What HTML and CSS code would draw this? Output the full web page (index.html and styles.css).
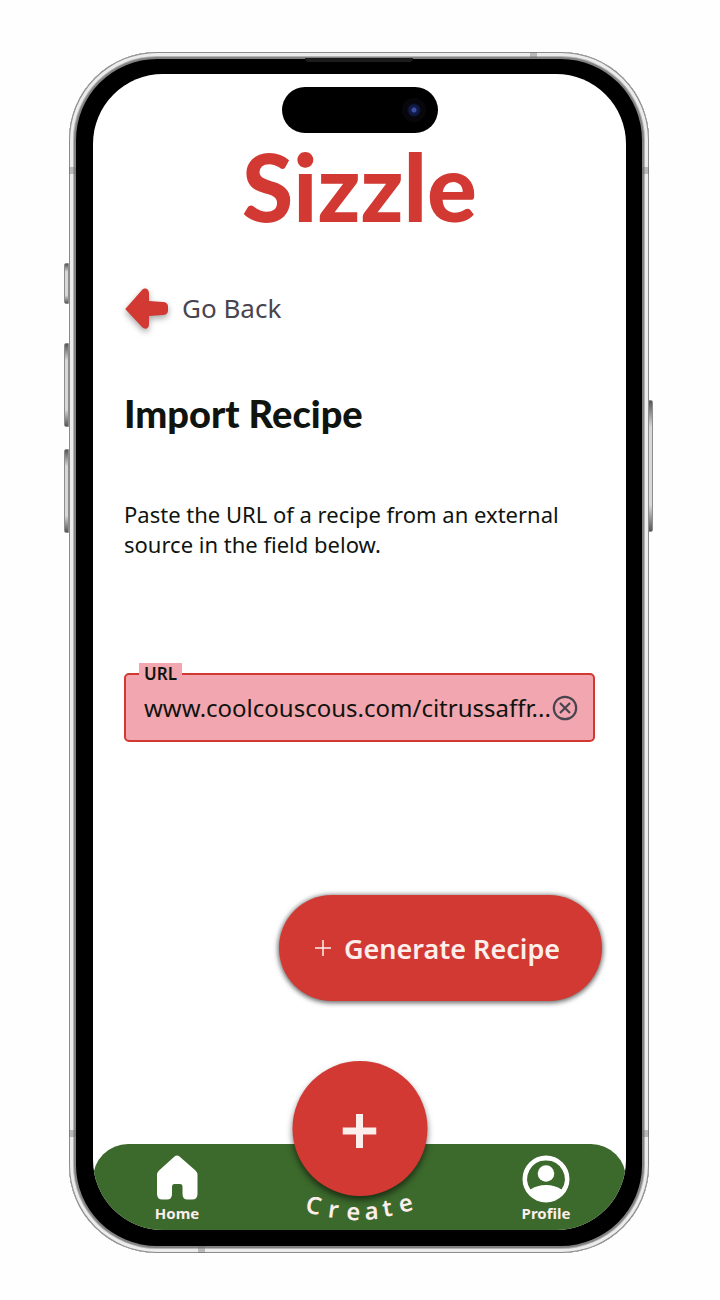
FILE: index.html
```html
<!DOCTYPE html>
<html lang="en">
<head>
<meta charset="utf-8">
<meta name="viewport" content="width=device-width, initial-scale=1">
<title>Sizzle – Import Recipe</title>
<link rel="stylesheet" href="styles.css">
</head>
<body>
<div class="phone">
  <span class="side-key key-action"></span>
  <span class="side-key key-up"></span>
  <span class="side-key key-down"></span>
  <span class="side-key key-power"></span>
  <span class="band band-left band-high"></span>
  <span class="band band-right band-high"></span>
  <span class="band band-left band-low"></span>
  <span class="band band-right band-low"></span>
  <span class="band band-top"></span>
  <span class="band band-bottom"></span>
  <span class="speaker"></span>

  <div class="screen">
    <div class="island"><span class="camera"></span></div>
    <header class="brand">Sizzle</header>

    <main class="content">
      <a class="back" href="#">
        <svg class="back-icon" viewBox="0 0 44 44" aria-hidden="true">
          <path d="M3 21 L18 4 C21 1 25 3 25 7 V15 L39 16 C42 16 44 18 44 20 V25 C44 27 42 29 39 29 L25 30 V38 C25 43 21 44 18 41 L3 25 C1 23 1 23 3 21 Z"/>
        </svg>
        <span>Go Back</span>
      </a>
      <h1 class="title">Import Recipe</h1>
      <p class="intro">Paste the URL of a recipe from an external source in the field below.</p>

      <div class="field">
        <label class="field-label" for="url">URL</label>
        <input class="field-input" id="url" type="text" value="www.coolcouscous.com/citrussaffr...">
        <button class="clear" type="button" aria-label="Clear">
          <svg viewBox="0 0 26 26" aria-hidden="true">
            <circle cx="13" cy="13" r="11.2"/>
            <path d="M8 8 L18 18 M18 8 L8 18"/>
          </svg>
        </button>
      </div>

      <button class="generate" type="button">
        <svg class="generate-plus" viewBox="0 0 16 16" aria-hidden="true"><path d="M8 0 V16 M0 8 H16"/></svg>
        <span>Generate Recipe</span>
      </button>
    </main>

    <nav class="nav">
      <a class="nav-item" href="#">
        <svg class="nav-icon" viewBox="0 0 48 48" aria-hidden="true">
          <path d="M21.500 1.500 Q24 -0.500 26.500 1.500 L42.500 15.500 Q44.500 17.500 44.500 20 V39 Q44.500 44.500 39 44.500 H34.500 Q29.500 44.500 29.500 39 V32 Q29.500 29 27 29 H21.500 Q19 29 19 32 V39 Q19 44.500 14 44.500 H9.500 Q4 44.500 4 39 V20 Q4 17.500 6 15.500 Z"/>
        </svg>
        <span>Home</span>
      </a>
      <a class="nav-item" href="#">
        <svg class="nav-icon" viewBox="0 0 48 48" aria-hidden="true">
          <path fill-rule="evenodd" d="M24 0.500 A23.500 23.500 0 1 0 24 47.500 A23.500 23.500 0 1 0 24 0.500 Z M24 5.500 A18.500 18.500 0 0 1 39.500 34.500 Q33 30 24 30 Q15 30 8.500 34.500 A18.500 18.500 0 0 1 24 5.500 Z"/>
          <circle cx="24" cy="18.500" r="8.300"/>
        </svg>
        <span>Profile</span>
      </a>
      <button class="create" type="button" aria-label="Create">
        <span class="create-disc">
          <svg viewBox="0 0 34 34" aria-hidden="true"><path d="M17 0 V34 M0 17 H34"/></svg>
        </span>
        <svg class="create-label" viewBox="0 0 136 52">
          <text x="12 35 54 73 92 109" y="35 40 43 43 40 36" rotate="12 8 3 -3 -9 -14">Create</text>
        </svg>
      </button>
    </nav>
  </div>
</div>
</body>
</html>
```
FILE: styles.css
```css
* {
  box-sizing: border-box;
}

body {
  margin: 0;
  padding: 52px 71px 47px 69px;
  background: #fefefe;
  color: #10140f;
  font-family: "Noto Sans", "Open Sans", sans-serif;
}

button {
  border: 0;
  padding: 0;
  font: inherit;
  cursor: pointer;
}

a {
  color: inherit;
  text-decoration: none;
}

/* Device frame */
.phone {
  position: relative;
  padding: 22px 23px 23px 24px;
  border-radius: 88px;
  background: #000;
  box-shadow:
    inset 0 0 0 1px #8b8b8b,
    inset 0 0 0 4px #ececec,
    inset 0 0 0 5px #b4b4b4,
    inset 0 0 0 7px #818383;
}

.side-key {
  position: absolute;
  left: -5px;
  width: 5px;
  border: 1px solid #8e8e8e;
  border-radius: 2px 0 0 2px;
  background: linear-gradient(#555, #d8d8d8 20%, #d8d8d8 80%, #555);
}

.key-action { top: 211px; height: 41px; }
.key-up { top: 291px; height: 84px; }
.key-down { top: 397px; height: 84px; }

.key-power {
  top: 348px;
  right: -4px;
  left: auto;
  height: 132px;
  border-radius: 0 2px 2px 0;
}

.band {
  position: absolute;
  width: 7px;
  height: 7px;
  background: rgba(110, 110, 110, 0.4);
}

.band-left { left: 0; }
.band-right { right: 0; }
.band-high { top: 115px; }
.band-low { bottom: 116px; }
.band-top { top: 0; right: 112px; height: 6px; }
.band-bottom { bottom: 0; left: 129px; }

.speaker {
  position: absolute;
  top: 6px;
  left: 50%;
  width: 108px;
  height: 4px;
  transform: translateX(-50%);
  border-radius: 0 0 4px 4px;
  background: #1d1d1d;
}

.screen {
  display: flex;
  flex-direction: column;
  overflow: hidden;
  border-radius: 70px;
  background: #fff;
}

.island {
  display: flex;
  align-items: center;
  align-self: center;
  justify-content: flex-end;
  width: 156px;
  height: 46px;
  margin-top: 13px;
  padding-right: 12px;
  border-radius: 23px;
  background: #000;
}

.camera {
  width: 24px;
  height: 24px;
  border-radius: 50%;
  background: radial-gradient(circle, #3c4fa0 0 2px, #101a48 3px 5px, #07060b 7px);
}

.brand {
  margin-top: 7px;
  color: #d23933;
  font: 900 93px/92px Lato, sans-serif;
  text-align: center;
}

/* Page content */
.content {
  display: flex;
  flex-direction: column;
  padding: 56px 31px 143px;
}

.back {
  display: flex;
  align-items: center;
  align-self: flex-start;
  gap: 14px;
  height: 40px;
  color: #49454f;
  font-size: 26px;
}

.back-icon {
  width: 44px;
  height: 44px;
  fill: #d23933;
  filter: drop-shadow(0 3px 3px rgba(0, 0, 0, 0.35));
}

.title {
  margin: 63px 0 0;
  font: 900 38px/44px Lato, sans-serif;
}

.intro {
  margin: 64px 0 0;
  font-size: 22px;
  line-height: 30px;
}

.field {
  position: relative;
  display: flex;
  align-items: center;
  height: 69px;
  margin-top: 114px;
  border: 2px solid #d23933;
  border-radius: 5px;
  background: #f2a6b0;
}

.field-label {
  position: absolute;
  top: -12px;
  left: 13px;
  padding: 0 5px;
  background: #f2a6b0;
  font-size: 17px;
  font-weight: 600;
  line-height: 21px;
}

.field-input {
  flex: 1;
  min-width: 0;
  height: 100%;
  padding: 0 16px 0 18px;
  border: 0;
  outline: 0;
  background: transparent;
  color: inherit;
  font: inherit;
  font-size: 24px;
}

.clear {
  position: absolute;
  right: 15px;
  width: 26px;
  height: 26px;
  background: none;
}

.clear svg {
  display: block;
  fill: none;
  stroke: #49454f;
  stroke-width: 2.2;
}

.generate {
  display: flex;
  align-items: center;
  align-self: flex-end;
  justify-content: center;
  gap: 13px;
  width: 323px;
  height: 106px;
  margin: 153px -7px 0 0;
  padding-right: 6px;
  border-radius: 53px;
  background: #d23933;
  box-shadow: 0 1px 5px 1px rgba(0, 0, 0, 0.6);
  color: #fceeeb;
  font-size: 27px;
  font-weight: 600;
}

.generate-plus {
  width: 16px;
  height: 16px;
  fill: none;
  stroke: currentColor;
  stroke-width: 1.5;
}

/* Bottom navigation */
.nav {
  position: relative;
  display: flex;
  justify-content: space-between;
  height: 86px;
  padding: 11px 52px 0 56px;
  border-radius: 35px 35px 0 0;
  background: #3c692c;
  color: #fceeeb;
}

.nav-item {
  display: flex;
  flex-direction: column;
  align-items: center;
  width: 56px;
  font-size: 15px;
  font-weight: 700;
  line-height: 20px;
}

.nav-icon {
  width: 48px;
  height: 48px;
  fill: #fff;
}

.create {
  position: absolute;
  top: -83px;
  left: 50%;
  width: 135px;
  transform: translateX(-50%);
  background: none;
  color: #fceeeb;
}

.create-disc {
  display: flex;
  align-items: center;
  justify-content: center;
  height: 135px;
  padding-top: 4px;
  border-radius: 50%;
  background: #d23933;
  box-shadow: 0 4px 6px rgba(0, 0, 0, 0.55);
}

.create-disc svg {
  width: 34px;
  height: 34px;
  fill: none;
  stroke: currentColor;
  stroke-width: 7;
}

.create-label {
  display: block;
  width: 100%;
  height: 52px;
  margin-top: -19px;
  overflow: visible;
  fill: currentColor;
  font-size: 24px;
  font-weight: 600;
}
```
